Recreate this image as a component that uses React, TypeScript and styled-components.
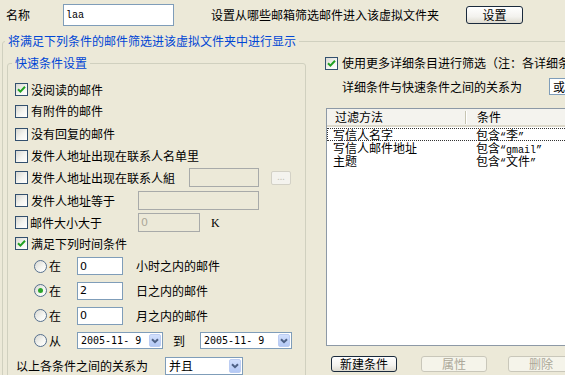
import styled, { createGlobalStyle } from "styled-components";

const GlobalStyle = createGlobalStyle`
  html, body {
    margin: 0;
    padding: 0;
    background: #ece9d8;
  }
`;

const Window = styled.div`
  width: 565px;
  height: 375px;
  overflow: hidden;
  background: #ece9d8;
  color: #000;
  font-family: "Noto Sans CJK SC", "Noto Sans", sans-serif;
  font-size: 12px;
  line-height: 16px;
`;

const TopRow = styled.div`
  display: flex;
  align-items: center;
  height: 30px;
  margin-bottom: 3px;
  padding-left: 6px;
`;

const Caption = styled.span<{ $w?: number; $ml?: number }>`
  flex: none;
  white-space: nowrap;
  width: ${(p) => (p.$w ? `${p.$w}px` : "auto")};
  margin-left: ${(p) => p.$ml ?? 0}px;
`;

const TextBox = styled.input<{ $w: number; $h: number; $ml?: number; $mono?: boolean }>`
  flex: none;
  box-sizing: border-box;
  width: ${(p) => p.$w}px;
  height: ${(p) => p.$h}px;
  margin: 0 0 0 ${(p) => p.$ml ?? 0}px;
  padding: 0 0 0 2px;
  border: 1px solid #7f9db9;
  background: #fff;
  color: #000;
  font-family: ${(p) =>
    p.$mono ? `"Liberation Mono", monospace` : `"DejaVu Sans", sans-serif`};
  font-size: ${(p) => (p.$mono ? 10 : 11)}px;
  outline: none;

  &:disabled {
    background: #ece9d8;
    border-color: #a8aaa9;
    color: #aca899;
  }
`;

const Button = styled.button<{ $w: number; $h: number; $ml?: number }>`
  flex: none;
  box-sizing: border-box;
  width: ${(p) => p.$w}px;
  height: ${(p) => p.$h}px;
  margin: 0 0 0 ${(p) => p.$ml ?? 0}px;
  padding: 0;
  border: 1px solid #1a2a3c;
  border-radius: 3px;
  background: linear-gradient(#ffffff 0%, #f3f2ee 60%, #dedbd0 100%);
  color: #000;
  font: inherit;
  line-height: 1;

  &:disabled {
    border-color: #c9c7ba;
    background: #f5f4ea;
    color: #aca899;
  }
`;

const Group = styled.fieldset`
  margin: 0;
  padding: 0;
  min-width: 0;
  border: 1px solid #d0d0bf;
  border-radius: 3px;
`;

const OuterGroup = styled(Group)`
  width: 640px;
  margin-left: 2px;
`;

const QuickGroup = styled(Group)`
  flex: none;
  box-sizing: border-box;
  width: 299px;
  height: 340px;
  margin: 6px 0 0 4px;
`;

const GroupTitle = styled.legend<{ $ml: number }>`
  margin-left: ${(p) => p.$ml}px;
  padding: 0 3px;
  color: #0046d5;
  line-height: 16px;
`;

const OuterBody = styled.div`
  display: flex;
  align-items: flex-start;
`;

const QuickBody = styled.div`
  padding-top: 8px;
`;

const Row = styled.div<{ $h: number; $indent?: number }>`
  display: flex;
  align-items: center;
  height: ${(p) => p.$h}px;
  padding-left: ${(p) => p.$indent ?? 0}px;
  white-space: nowrap;
`;

const OptionLabel = styled.label<{ $w?: number; $gap?: number }>`
  flex: none;
  display: flex;
  align-items: center;
  gap: ${(p) => p.$gap ?? 3}px;
  width: ${(p) => (p.$w ? `${p.$w}px` : "auto")};
`;

const Box = styled.span`
  flex: none;
  box-sizing: border-box;
  display: inline-flex;
  align-items: center;
  justify-content: center;
  width: 13px;
  height: 13px;
  border: 1px solid #33506e;
  background: linear-gradient(135deg, #d8d8d2 0%, #f4f4f0 55%, #ffffff 100%);
`;

const Round = styled.span<{ $on?: boolean }>`
  flex: none;
  box-sizing: border-box;
  display: inline-flex;
  align-items: center;
  justify-content: center;
  width: 13px;
  height: 13px;
  border: 1px solid #56708e;
  border-radius: 50%;
  background: linear-gradient(135deg, #d8d8d2 0%, #f6f6f2 60%, #ffffff 100%);

  &::after {
    content: "";
    display: ${(p) => (p.$on ? "block" : "none")};
    width: 5px;
    height: 5px;
    border-radius: 50%;
    background: #2ca52c;
  }
`;

const SmallButton = styled.span`
  flex: none;
  box-sizing: border-box;
  width: 20px;
  height: 14px;
  margin-left: 12px;
  border: 1px solid #d3d1c6;
  border-radius: 2px;
  background: #f4f3ee;
  color: #c6c4b8;
  font-size: 9px;
  line-height: 10px;
  text-align: center;
`;

const Unit = styled.span`
  margin-left: 11px;
  font-family: "Liberation Serif", serif;
  font-size: 12px;
`;

const Combo = styled.div<{ $w: number; $h: number; $ml?: number }>`
  flex: none;
  box-sizing: border-box;
  display: flex;
  align-items: stretch;
  width: ${(p) => p.$w}px;
  height: ${(p) => p.$h}px;
  margin-left: ${(p) => p.$ml ?? 0}px;
  padding: 1px;
  border: 1px solid #7f9db9;
  background: #fff;
`;

const ComboText = styled.span<{ $mono?: boolean }>`
  flex: 1;
  display: flex;
  align-items: center;
  padding-left: 2px;
  overflow: hidden;
  line-height: 12px;
  font-family: ${(p) =>
    p.$mono ? `"DejaVu Sans Mono", monospace` : `"Noto Sans CJK SC", sans-serif`};
  font-size: ${(p) => (p.$mono ? 10 : 12)}px;
`;

const DropButton = styled.span`
  flex: none;
  box-sizing: border-box;
  display: flex;
  align-items: center;
  justify-content: center;
  width: 12px;
  border: 1px solid #bccdf3;
  border-radius: 2px;
  background: linear-gradient(#d2e0fd, #b4c9f5);
`;

const DetailPane = styled.div`
  flex: none;
  width: 300px;
  margin-left: 19px;
  padding-top: 3px;
`;

const ListView = styled.div`
  box-sizing: border-box;
  width: 280px;
  height: 238px;
  margin: 9px 0 0 1px;
  border: 1px solid #8d99a6;
  background: #fff;
`;

const ListHeader = styled.div`
  box-sizing: border-box;
  display: grid;
  grid-template-columns: 138px 2px 1fr;
  align-items: center;
  height: 18px;
  background: #f4f3ee;
  border-bottom: 2px solid #dcd8ca;
`;

const HeadCell = styled.span<{ $pl: number }>`
  padding-left: ${(p) => p.$pl}px;
`;

const HeadDivider = styled.span`
  box-sizing: border-box;
  height: 13px;
  border-left: 1px solid #c7c5b2;
  border-right: 1px solid #fff;
`;

const ListBody = styled.div`
  margin-top: 1px;
`;

const ListRow = styled.div<{ $focused?: boolean }>`
  display: grid;
  grid-template-columns: 140px 1fr;
  height: 13px;
  line-height: 13px;
  white-space: nowrap;
  outline: ${(p) => (p.$focused ? "1px dotted #333" : "none")};
  outline-offset: -1px;
`;

const Cell = styled.span<{ $pl: number }>`
  padding-left: ${(p) => p.$pl}px;
`;

const Mono = styled.span`
  font-family: "Liberation Mono", monospace;
  font-size: 10px;
`;

const ButtonBar = styled.div`
  display: flex;
  align-items: center;
  margin-top: 10px;
  padding-left: 6px;
`;

function Check({ checked }: { checked?: boolean }) {
  return (
    <Box>
      {checked && (
        <svg width="9" height="9" viewBox="0 0 9 9">
          <path d="M1 4.2 L3.4 6.6 L8 1.8" fill="none" stroke="#21a121" strokeWidth="2" />
        </svg>
      )}
    </Box>
  );
}

function Chevron() {
  return (
    <svg width="8" height="6" viewBox="0 0 8 6">
      <path d="M1 1.2 L4 4.2 L7 1.2" fill="none" stroke="#4d6185" strokeWidth="2" />
    </svg>
  );
}

type DropDownProps = { value: string; w: number; h: number; ml?: number; mono?: boolean };

function DropDown({ value, w, h, ml, mono }: DropDownProps) {
  return (
    <Combo $w={w} $h={h} $ml={ml}>
      <ComboText $mono={mono}>{value}</ComboText>
      <DropButton>
        <Chevron />
      </DropButton>
    </Combo>
  );
}

function Contains({ text, latin }: { text: string; latin?: boolean }) {
  return (
    <>
      包含
      {latin ? (
        <Mono>“{text}”</Mono>
      ) : (
        <>
          <Mono>“</Mono>
          {text}
          <Mono>”</Mono>
        </>
      )}
    </>
  );
}

const timeRules = [
  { on: false, value: "0", unit: "小时之内的邮件" },
  { on: true, value: "2", unit: "日之内的邮件" },
  { on: false, value: "0", unit: "月之内的邮件" },
];

const filters = [
  { field: "写信人名字", text: "李", latin: false },
  { field: "写信人邮件地址", text: "gmail", latin: true },
  { field: "主题", text: "文件", latin: false },
];

export default function App() {
  return (
    <Window>
      <GlobalStyle />
      <TopRow>
        <Caption $w={57}>名称</Caption>
        <TextBox $w={111} $h={22} $mono readOnly defaultValue="laa" />
        <Caption $ml={37}>设置从哪些邮箱筛选邮件进入该虚拟文件夹</Caption>
        <Button $w={57} $h={18} $ml={27}>
          设置
        </Button>
      </TopRow>

      <OuterGroup>
        <GroupTitle $ml={2}>将满足下列条件的邮件筛选进该虚拟文件夹中进行显示</GroupTitle>
        <OuterBody>
          <QuickGroup>
            <GroupTitle $ml={4}>快速条件设置</GroupTitle>
            <QuickBody>
              <Row $h={21} $indent={7}>
                <OptionLabel>
                  <Check checked />
                  没阅读的邮件
                </OptionLabel>
              </Row>
              <Row $h={22} $indent={7}>
                <OptionLabel>
                  <Check />
                  有附件的邮件
                </OptionLabel>
              </Row>
              <Row $h={24} $indent={7}>
                <OptionLabel>
                  <Check />
                  没有回复的邮件
                </OptionLabel>
              </Row>
              <Row $h={20} $indent={7}>
                <OptionLabel>
                  <Check />
                  发件人地址出现在联系人名单里
                </OptionLabel>
              </Row>
              <Row $h={23} $indent={7}>
                <OptionLabel $w={174}>
                  <Check />
                  发件人地址出现在联系人組
                </OptionLabel>
                <TextBox $w={70} $h={19} disabled />
                <SmallButton>...</SmallButton>
              </Row>
              <Row $h={23} $indent={7}>
                <OptionLabel $w={123}>
                  <Check />
                  发件人地址等于
                </OptionLabel>
                <TextBox $w={121} $h={19} disabled />
              </Row>
              <Row $h={21} $indent={7}>
                <OptionLabel $w={123} $gap={2}>
                  <Check />
                  邮件大小大于
                </OptionLabel>
                <TextBox $w={62} $h={19} disabled defaultValue="0" />
                <Unit>K</Unit>
              </Row>
              <Row $h={21} $indent={7}>
                <OptionLabel>
                  <Check checked />
                  满足下列时间条件
                </OptionLabel>
              </Row>
              {timeRules.map((rule, i) => (
                <Row key={i} $h={i === 0 ? 24 : 25} $indent={26}>
                  <OptionLabel $w={43} $gap={2}>
                    <Round $on={rule.on} />在
                  </OptionLabel>
                  <TextBox $w={46} $h={18} readOnly defaultValue={rule.value} />
                  <Caption $ml={13}>{rule.unit}</Caption>
                </Row>
              ))}
              <Row $h={25} $indent={26}>
                <OptionLabel $w={43} $gap={2}>
                  <Round />从
                </OptionLabel>
                <DropDown value="2005-11- 9" w={86} h={17} mono />
                <Caption $ml={10}>到</Caption>
                <DropDown value="2005-11- 9" w={92} h={17} ml={15} mono />
              </Row>
              <Row $h={26} $indent={8}>
                <Caption $w={149}>以上各条件之间的关系为</Caption>
                <DropDown value="并且" w={78} h={18} />
              </Row>
            </QuickBody>
          </QuickGroup>

          <DetailPane>
            <Row $h={22}>
              <OptionLabel $gap={4}>
                <Check checked />
                使用更多详细条目进行筛选（注：各详细条件之间为“并且”关系）
              </OptionLabel>
            </Row>
            <Row $h={25} $indent={17}>
              <Caption $w={207}>详细条件与快速条件之间的关系为</Caption>
              <DropDown value="或" w={60} h={17} />
            </Row>
            <ListView>
              <ListHeader>
                <HeadCell $pl={8}>过滤方法</HeadCell>
                <HeadDivider />
                <HeadCell $pl={10}>条件</HeadCell>
              </ListHeader>
              <ListBody>
                {filters.map((f, i) => (
                  <ListRow key={f.field} $focused={i === 0}>
                    <Cell $pl={6}>{f.field}</Cell>
                    <Cell $pl={9}>
                      <Contains text={f.text} latin={f.latin} />
                    </Cell>
                  </ListRow>
                ))}
              </ListBody>
            </ListView>
            <ButtonBar>
              <Button $w={66} $h={16}>
                新建条件
              </Button>
              <Button $w={66} $h={16} $ml={24} disabled>
                属性
              </Button>
              <Button $w={66} $h={16} $ml={21} disabled>
                删除
              </Button>
            </ButtonBar>
          </DetailPane>
        </OuterBody>
      </OuterGroup>
    </Window>
  );
}
